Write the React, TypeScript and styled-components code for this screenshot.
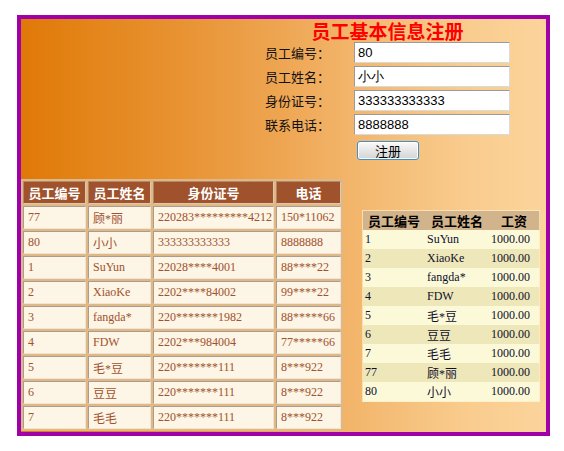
import React, { FunctionComponent } from 'react';
import styled, { createGlobalStyle } from 'styled-components';

const GlobalStyle = createGlobalStyle`
  body {
    margin: 0;
    background: #fff;
    font-family: 'Liberation Serif', 'Noto Sans CJK SC', serif;
  }
`;

const Frame = styled.div`
  box-sizing: border-box;
  width: 533px;
  height: 421px;
  margin: 15px 0 0 17px;
  border: 4px solid #a000a8;
  background: linear-gradient(
    to right,
    #e07808 0%,
    #e38418 12%,
    #e89232 30%,
    #eea653 50%,
    #f4bb74 68%,
    #f9cc8e 85%,
    #fcd49c 100%
  );
  display: flex;
  flex-direction: column;
  overflow: hidden;
`;

const Header = styled.div`
  height: 160px;
  padding-left: 244px;
`;

const FormBox = styled.div`
  width: 245px;
`;

const Title = styled.div`
  height: 23px;
  line-height: 23px;
  text-align: center;
  font-family: 'Noto Sans CJK SC', sans-serif;
  font-size: 19px;
  font-weight: bold;
  color: #ff0000;
`;

const FormGrid = styled.div`
  display: grid;
  grid-template-columns: 89px 156px;
  grid-auto-rows: 21px;
  row-gap: 3px;
`;

const Label = styled.label`
  display: flex;
  align-items: center;
  font-family: 'Noto Sans CJK SC', sans-serif;
  font-size: 13px;
  color: #111;
`;

const Input = styled.input`
  box-sizing: border-box;
  width: 156px;
  height: 21px;
  margin: 0;
  padding: 0 3px;
  border: 1px solid;
  border-color: #9a9a9a #dadada #dadada #9a9a9a;
  background: #fff;
  font-family: 'Liberation Sans', sans-serif;
  font-size: 13px;
  color: #000;
  outline: none;
`;

const ButtonCell = styled.div`
  grid-column: 2;
  padding-left: 3px;
  padding-top: 3px;
`;

const Button = styled.button`
  width: 62px;
  height: 19px;
  padding: 0;
  border: 1px solid #3a92d2;
  border-radius: 3px;
  background: linear-gradient(#fbfbfb, #e2e2e2 60%, #d4d4d4);
  box-shadow: inset 0 0 0 1px #ffffff;
  font-family: 'Noto Sans CJK SC', sans-serif;
  font-size: 13px;
  line-height: 16px;
  color: #000;
`;

const Bottom = styled.div`
  display: flex;
  align-items: flex-start;
`;

const StaffTable = styled.table`
  border-collapse: separate;
  border-spacing: 2px;
  background: #deb887;
  table-layout: fixed;
`;

const StaffHead = styled.th<{ w: number }>`
  box-sizing: border-box;
  width: ${(p) => p.w}px;
  height: 23px;
  padding: 0;
  border: 1px solid;
  border-color: #b08a68 #e2c8a8 #e2c8a8 #b08a68;
  background: #a0522d;
  color: #fff;
  font-family: 'Noto Sans CJK SC', sans-serif;
  font-size: 13px;
  font-weight: bold;
  text-align: center;
`;

const StaffCell = styled.td`
  box-sizing: border-box;
  height: 23px;
  padding: 0 0 0 4px;
  border: 1px solid;
  border-color: #ab9c8e #f2e4d0 #f2e4d0 #ab9c8e;
  background: #fdf5e6;
  color: #a0522d;
  font-size: 12px;
  white-space: nowrap;
  overflow: hidden;
`;

const SalaryTable = styled.table`
  margin: 31px 0 0 19px;
  border-collapse: collapse;
  table-layout: fixed;
  border: 1px solid rgba(255, 236, 196, 0.7);
`;

const SalaryHead = styled.th<{ w: number }>`
  width: ${(p) => p.w}px;
  height: 18px;
  padding: 0;
  background: #d2b48c;
  color: #000;
  font-family: 'Noto Sans CJK SC', sans-serif;
  font-size: 13px;
  font-weight: bold;
  text-align: center;
`;

const SalaryRow = styled.tr<{ alt: boolean }>`
  background: ${(p) => (p.alt ? '#eee7b9' : '#fcf9d9')};
`;

const SalaryCell = styled.td`
  height: 19px;
  padding: 0 2px;
  color: #10102a;
  font-size: 12px;
  white-space: nowrap;
`;

const staff = [
  ['77', '顾*丽', '220283*********4212', '150*11062'],
  ['80', '小小', '333333333333', '8888888'],
  ['1', 'SuYun', '22028****4001', '88****22'],
  ['2', 'XiaoKe', '2202****84002', '99****22'],
  ['3', 'fangda*', '220*******1982', '88*****66'],
  ['4', 'FDW', '2202***984004', '77*****66'],
  ['5', '毛*豆', '220*******111', '8***922'],
  ['6', '豆豆', '220*******111', '8***922'],
  ['7', '毛毛', '220*******111', '8***922'],
];

const salaries = [
  ['1', 'SuYun'],
  ['2', 'XiaoKe'],
  ['3', 'fangda*'],
  ['4', 'FDW'],
  ['5', '毛*豆'],
  ['6', '豆豆'],
  ['7', '毛毛'],
  ['77', '顾*丽'],
  ['80', '小小'],
];

const fields = [
  ['员工编号：', '80'],
  ['员工姓名：', '小小'],
  ['身份证号：', '333333333333'],
  ['联系电话：', '8888888'],
];

const App: FunctionComponent = () => {
  return (
    <>
      <GlobalStyle />
      <Frame>
        <Header>
          <FormBox>
            <Title>员工基本信息注册</Title>
            <FormGrid>
              {fields.map(([label, value]) => (
                <React.Fragment key={label}>
                  <Label>{label}</Label>
                  <Input defaultValue={value} />
                </React.Fragment>
              ))}
              <ButtonCell>
                <Button type="button">注册</Button>
              </ButtonCell>
            </FormGrid>
          </FormBox>
        </Header>
        <Bottom>
          <StaffTable>
            <thead>
              <tr>
                <StaffHead w={63}>员工编号</StaffHead>
                <StaffHead w={63}>员工姓名</StaffHead>
                <StaffHead w={121}>身份证号</StaffHead>
                <StaffHead w={65}>电话</StaffHead>
              </tr>
            </thead>
            <tbody>
              {staff.map((row) => (
                <tr key={row[0]}>
                  {row.map((cell, i) => (
                    <StaffCell key={i}>{cell}</StaffCell>
                  ))}
                </tr>
              ))}
            </tbody>
          </StaffTable>
          <SalaryTable>
            <thead>
              <tr>
                <SalaryHead w={62}>员工编号</SalaryHead>
                <SalaryHead w={64}>员工姓名</SalaryHead>
                <SalaryHead w={50}>工资</SalaryHead>
              </tr>
            </thead>
            <tbody>
              {salaries.map(([id, name], i) => (
                <SalaryRow key={id} alt={i % 2 === 1}>
                  <SalaryCell>{id}</SalaryCell>
                  <SalaryCell>{name}</SalaryCell>
                  <SalaryCell>1000.00</SalaryCell>
                </SalaryRow>
              ))}
            </tbody>
          </SalaryTable>
        </Bottom>
      </Frame>
    </>
  );
};

export default App;
